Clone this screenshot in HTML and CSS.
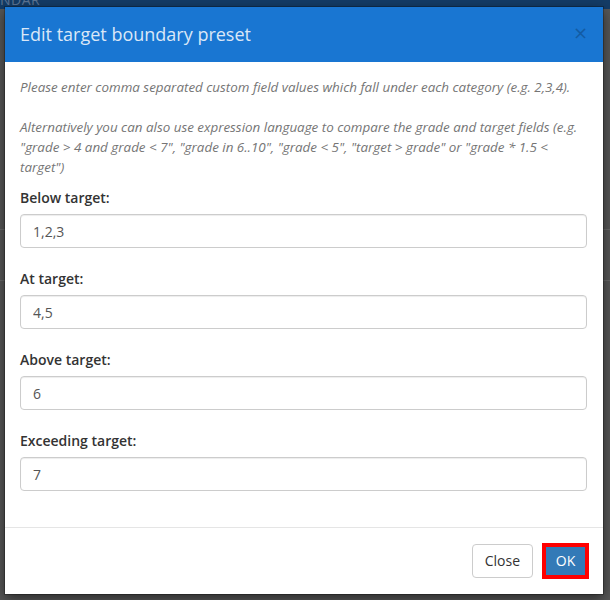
FILE: index.html
```html
<!DOCTYPE html>
<html>
<head>
<meta charset="utf-8">
<link rel="stylesheet" href="styles.css">
</head>
<body>
<div class="backdrop">
  <div class="backdrop-bar"><span class="backdrop-text">NDAR</span></div>
</div>
<div class="modal">
  <div class="modal-header">
    <h4 class="modal-title">Edit target boundary preset</h4>
    <button class="close" type="button">×</button>
  </div>
  <div class="modal-body">
    <p class="help">Please enter comma separated custom field values which fall under each category (e.g. 2,3,4).<br><br>Alternatively you can also use expression language to compare the grade and target fields (e.g. "grade &gt; 4 and grade &lt; 7", "grade in 6..10", "grade &lt; 5", "target &gt; grade" or "grade * 1.5 &lt; target")</p>
    <div class="form-group">
      <label class="label">Below target:</label>
      <input class="input" type="text" value="1,2,3">
    </div>
    <div class="form-group">
      <label class="label">At target:</label>
      <input class="input" type="text" value="4,5">
    </div>
    <div class="form-group">
      <label class="label">Above target:</label>
      <input class="input" type="text" value="6">
    </div>
    <div class="form-group">
      <label class="label">Exceeding target:</label>
      <input class="input" type="text" value="7">
    </div>
  </div>
  <div class="modal-footer">
    <button class="btn btn-default" type="button">Close</button>
    <button class="btn btn-primary" type="button">OK</button>
  </div>
</div>
</body>
</html>
```
FILE: styles.css
```css
html, body {
  margin: 0;
  padding: 0;
}
body {
  width: 610px;
  height: 600px;
  overflow: hidden;
  background: #575757;
  font-family: "Open Sans", "Liberation Sans", sans-serif;
  font-size: 14px;
  line-height: 1.42857;
  color: #333;
  position: relative;
}
.backdrop {
  position: absolute;
  left: 0;
  top: 0;
  width: 610px;
  height: 600px;
  background:
    linear-gradient(#6a6a6a, #6a6a6a) 0 229px / 100% 1px no-repeat,
    linear-gradient(#6a6a6a, #6a6a6a) 0 280px / 100% 1px no-repeat,
    #575757;
}
.backdrop-bar {
  height: 9px;
  background: #143c66;
  overflow: hidden;
}
.backdrop-text {
  display: block;
  margin-top: -8px;
  font-size: 14px;
  line-height: 16px;
  color: #5d7594;
  letter-spacing: 0.5px;
}
.modal {
  position: relative;
  margin: 7px 0 0 5px;
  width: 598px;
  background: #fff;
  box-shadow: 0 4px 12px rgba(0, 0, 0, 0.55), 0 0 0 1px rgba(0, 0, 0, 0.25);
}
.modal-header {
  background: #1976d2;
  padding: 15px;
  height: 25px;
  display: flex;
  justify-content: space-between;
  align-items: flex-start;
}
.modal-title {
  margin: 0;
  font-size: 18px;
  font-weight: 400;
  line-height: 25px;
  color: #dae7f7;
}
.close {
  border: 0;
  background: none;
  padding: 0;
  margin-top: 1px;
  font-family: "DejaVu Sans", sans-serif;
  font-size: 18px;
  font-weight: 400;
  line-height: 20px;
  color: #000;
  opacity: 0.22;
}
.modal-body {
  padding: 15px 16px 15px 15px;
}
.help {
  margin: 0 0 11px;
  font-size: 13.4px;
  font-style: italic;
  line-height: 20px;
  color: #757575;
}
.form-group {
  display: flex;
  flex-direction: column;
  margin-bottom: 21px;
}
.form-group:last-child {
  margin-bottom: 21px;
}
.label {
  font-size: 14px;
  font-weight: 600;
  line-height: 20px;
  margin-bottom: 6px;
  color: #333;
}
.input {
  box-sizing: border-box;
  height: 34px;
  padding: 6px 12px;
  border: 1px solid #ccc;
  border-radius: 4px;
  font-family: "Open Sans", "Liberation Sans", sans-serif;
  font-size: 14px;
  color: #555;
  background: #fff;
  box-shadow: inset 0 1px 1px rgba(0, 0, 0, 0.075);
}
.modal-footer {
  border-top: 1px solid #e5e5e5;
  padding: 15px 14px 15px 15px;
  display: flex;
  justify-content: flex-end;
  align-items: center;
  gap: 9px;
}
.btn {
  box-sizing: border-box;
  font-family: "Open Sans", "Liberation Sans", sans-serif;
  font-size: 14px;
  line-height: 20px;
  cursor: pointer;
}
.btn-default {
  height: 34px;
  padding: 6px 12px;
  border: 1px solid #ccc;
  border-radius: 4px;
  background: #fff;
  color: #333;
}
.btn-primary {
  width: 47px;
  height: 36px;
  padding: 0;
  border: 4px solid #ff0000;
  border-radius: 0;
  background: #337ab7;
  color: #fff;
}
```
